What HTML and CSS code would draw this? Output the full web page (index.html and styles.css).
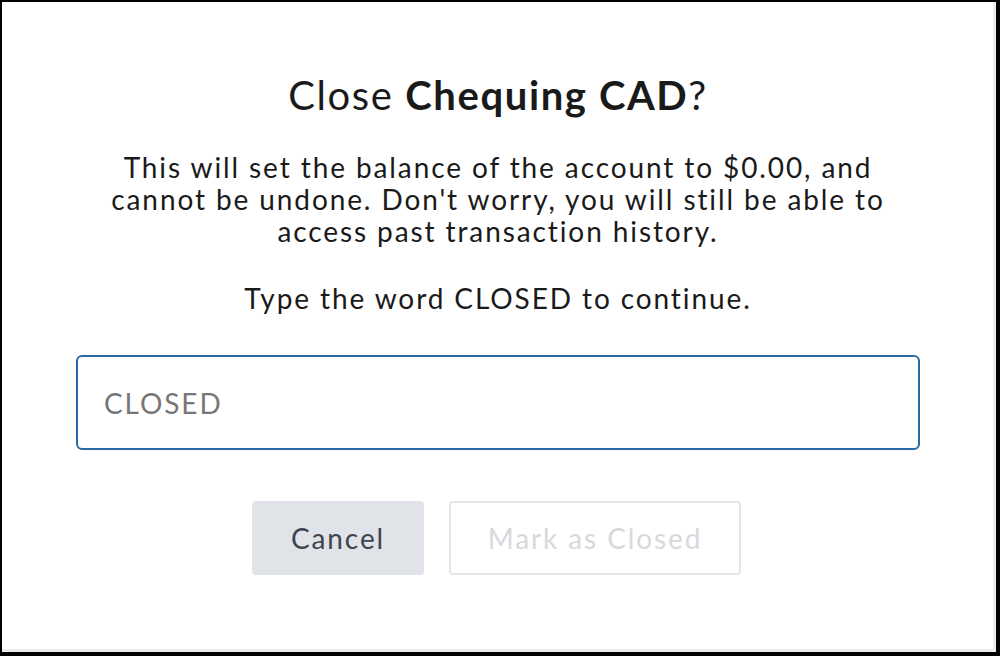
FILE: index.html
```html
<!DOCTYPE html>
<html lang="en">
<head>
    <meta charset="UTF-8">
    <title>Close account</title>
    <link rel="stylesheet" href="styles.css">
</head>
<body>
<div class="frame">
    <div class="dialog">
        <h1 class="title">Close <b>Chequing CAD</b>?</h1>
        <p class="note">This will set the balance of the account to $0.00, and cannot be undone. Don't worry, you will still be able to access past transaction history.</p>
        <p class="prompt">Type the word CLOSED to continue.</p>
        <input class="confirm" type="text" placeholder="CLOSED">
        <div class="actions">
            <button class="btn cancel">Cancel</button>
            <button class="btn close" disabled>Mark as Closed</button>
        </div>
    </div>
</div>
</body>
</html>
```

FILE: styles.css
```css
* {
    margin: 0;
    padding: 0;
    box-sizing: border-box;
}

body {
    background: #000;
    font-family: "Lato", "Liberation Sans", sans-serif;
    color: #1a1a1a;
}

.frame {
    height: 656px;
    border-style: solid;
    border-color: #000;
    border-width: 2px 4px 4px 2px;
    background: #fff;
    box-shadow: inset -3px -3px 0 #ececec;
}

.dialog {
    display: flex;
    flex-direction: column;
    align-items: center;
    padding: 69px 76px 0 74px;
    text-align: center;
}

.title {
    font-size: 40px;
    font-weight: 400;
    line-height: 48px;
    letter-spacing: 1.6px;
}

.title b {
    font-weight: 700;
}

.note,
.prompt,
.confirm,
.btn {
    font-family: "Lato", "Liberation Sans", sans-serif;
    font-size: 28px;
    letter-spacing: 1.9px;
}

.note {
    margin-top: 32px;
    width: 800px;
    line-height: 32px;
}

.prompt {
    margin-top: 35px;
    line-height: 32px;
}

.confirm {
    margin-top: 41px;
    width: 100%;
    height: 95px;
    border: 2px solid #2a6aa3;
    border-radius: 6px;
    padding: 0 26px;
    outline: none;
}

.confirm::placeholder {
    color: #777;
}

.actions {
    display: flex;
    gap: 25px;
    margin: 51px 3px 0 0;
}

.btn {
    height: 74px;
    border-radius: 4px;
}

.cancel {
    width: 172px;
    background: #e0e3e7;
    border: none;
    color: #3e4550;
}

.close {
    width: 292px;
    background: #fff;
    border: 2px solid #e4e6e9;
    color: #d6d9dd;
}
```
